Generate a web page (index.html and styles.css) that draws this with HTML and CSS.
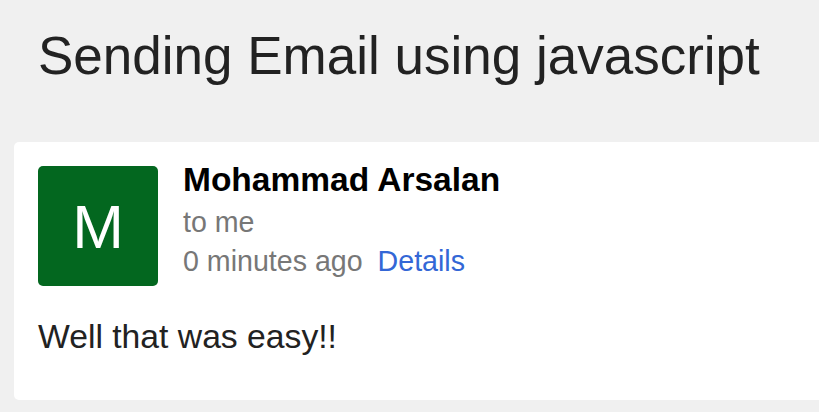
FILE: index.html
```html
<!DOCTYPE html>
<html lang="en">
<head>
  <meta charset="utf-8" />
  <meta name="viewport" content="width=device-width, initial-scale=1.0" />
  <title>Sending Email using javascript</title>
  <link rel="stylesheet" href="styles.css">
</head>
<body>
  <h1 class="title">Sending Email using javascript</h1>

  <div class="mail">
    <div class="mail-head">
      <div class="avatar">M</div>
      <div class="meta">
        <div class="sender">Mohammad Arsalan</div>
        <div class="to">to me</div>
        <div class="when">0 minutes ago <a href="#" class="details">Details</a></div>
      </div>
    </div>
    <p class="mail-body">Well that was easy!!</p>
  </div>
</body>
</html>
```

FILE: styles.css
```css
body {
  margin: 0;
  padding: 0 0 0 14px;
  background: #f0f0f0;
  font-family: 'Liberation Sans', Arial, sans-serif;
  color: #222;
  overflow: hidden;
}

.title {
  margin: 25px 0 0 24px;
  font-size: 53px;
  font-weight: normal;
  line-height: 62px;
  color: #222;
  white-space: nowrap;
}

.mail {
  margin-top: 55px;
  width: 900px;
  background: #fff;
  border-radius: 5px;
  padding: 24px;
}

.mail-head {
  display: flex;
  align-items: flex-start;
  gap: 25px;
}

.avatar {
  width: 120px;
  height: 120px;
  border-radius: 5px;
  background: #03671f;
  color: #fff;
  font-size: 62px;
  display: flex;
  align-items: center;
  justify-content: center;
}

.sender {
  font-size: 33.5px;
  font-weight: bold;
  line-height: 28px;
  color: #000;
}

.to {
  margin-top: 9px;
  font-size: 28.6px;
  line-height: 38px;
  color: #777;
}

.when {
  margin-top: 1px;
  font-size: 28.6px;
  line-height: 38px;
  color: #777;
}

.details {
  margin-left: 7px;
  color: #3367d6;
  text-decoration: none;
}

.mail-body {
  margin: 31px 0 21px;
  font-size: 33.7px;
  line-height: 38px;
  color: #222;
}
```
